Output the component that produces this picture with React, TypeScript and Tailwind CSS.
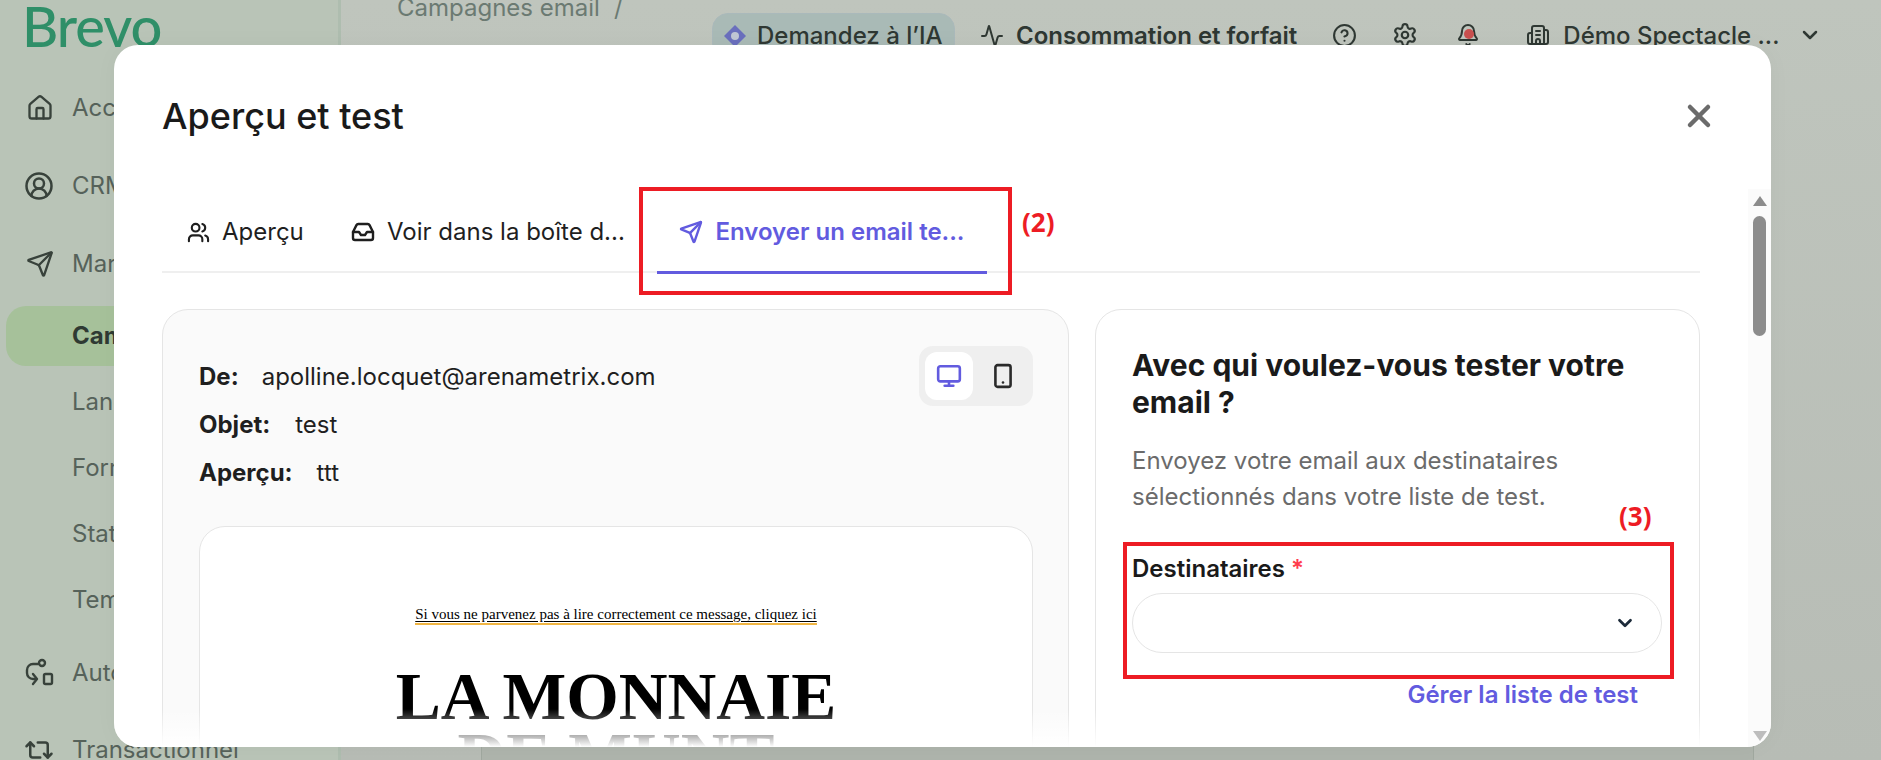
import { Activity, Bell, Building2, ChevronDown, CircleHelp, CircleUserRound, House, Inbox, Monitor, Repeat2, Send, Settings, Smartphone, Users, X } from "lucide-react";

const F = "font-['Inter','Liberation_Sans',sans-serif]";

function SubItem({ label, active }: { label: string; active?: boolean }) {
  return (
    <div className={`flex shrink-0 items-center rounded-[20px] pl-[66px] text-[24px] ${active ? "my-[3px] h-[60px] bg-[#a6c19a] font-bold text-[#2f3a33]" : "h-[66px] text-[#56625a]"}`}>
      {label}
    </div>
  );
}

function NavItem({ icon, label, height }: { icon: React.ReactNode; label: string; height: string }) {
  return (
    <div className={`flex shrink-0 items-center pl-[18px] text-[24px] text-[#56625a] ${height}`}>
      <span className="flex w-[48px] shrink-0 items-center">{icon}</span>
      <span className="whitespace-nowrap">{label}</span>
    </div>
  );
}

function Automation() {
  return (
    <svg width="30" height="30" viewBox="0 0 30 30" fill="none" stroke="#38423b" strokeWidth="2.4" strokeLinecap="round" strokeLinejoin="round">
      <circle cx="18" cy="5" r="3" />
      <path d="M14 6H9a6 6 0 0 0-6 6v3a6 6 0 0 0 6 6h3" />
      <path d="M9 16l4 5-4 5" />
      <rect x="20" y="16" width="8" height="10" rx="1.5" />
    </svg>
  );
}

function Tab({ icon, label, active, cls }: { icon: React.ReactNode; label: string; active?: boolean; cls: string }) {
  return (
    <div className={`flex h-[85px] items-center gap-[12px] border-b-[3px] pt-[4px] text-[24px] ${cls} ${active ? "border-[#625bdf] font-semibold text-[#625bdf]" : "border-transparent text-[#1f1f1f]"}`}>
      {icon}
      <span className="whitespace-nowrap">{label}</span>
    </div>
  );
}

export default function App() {
  return (
    <div className={`relative flex h-[760px] w-[1881px] overflow-hidden bg-gradient-to-b from-[#bfc5bd] to-[#b7bcb5] ${F}`}>
      <aside className="flex h-full w-[341px] shrink-0 flex-col border-r-[3px] border-[#aebdaf] bg-[#b9c4b7] pl-[6px] pr-[10px]">
        <div className="-mt-[9px] ml-[16px] h-[78px] shrink-0 text-[56px] font-medium leading-[70px] tracking-[-1px] font-['Lato',sans-serif] text-[#2f8f68]">Brevo</div>
        <NavItem height="h-[78px]" label="Accueil" icon={<House size={28} color="#38423b" className="ml-[2px]" />} />
        <NavItem height="h-[78px]" label="CRM" icon={<CircleUserRound size={30} color="#38423b" />} />
        <NavItem height="h-[78px]" label="Marketing" icon={<Send size={28} color="#38423b" className="ml-[2px]" />} />
        <SubItem label="Campagnes" active />
        <SubItem label="Landing pages" />
        <SubItem label="Formulaires" />
        <SubItem label="Statistiques" />
        <SubItem label="Templates" />
        <div className="h-[2px] shrink-0" />
        <NavItem height="h-[76px]" label="Automatisations" icon={<Automation />} />
        <NavItem height="h-[78px]" label="Transactionnel" icon={<Repeat2 size={30} color="#38423b" />} />
      </aside>

      <div className="flex min-w-0 flex-1 flex-col">
        <header className="relative h-[70px] shrink-0 text-[#2f3833]">
          <div className="flex h-[70px] items-start pl-[56px]">
            <div className="-mt-[6px] flex w-[315px] gap-[14px] whitespace-nowrap text-[24px] leading-[28px] text-[#6b7a72]"><span>Campagnes email</span><span>/</span></div>
            <div className="mt-[13px] flex h-[46px] w-[243px] items-center gap-[10px] rounded-[16px] border border-[#aab9bb] bg-[#a9bab6] pl-[10px] text-[24px] font-medium">
              <svg width="24" height="24" viewBox="0 0 24 24"><path d="M12 1l11 11-11 11L1 12z" fill="#6a6fbd" /><circle cx="12" cy="12" r="4" fill="#c0c6d4" /></svg>
              <span className="whitespace-nowrap">Demandez à l’IA</span>
            </div>
            <div className="ml-[25px] mt-[13px] flex h-[46px] items-center gap-[12px] whitespace-nowrap text-[24px] font-semibold"><Activity size={24} />Consommation et forfait</div>
            <CircleHelp size={25} className="ml-[35px] mt-[23px] shrink-0" />
            <Settings size={26} className="ml-[35px] mt-[22px] shrink-0" />
            <div className="relative ml-[38px] mt-[23px] h-[25px] w-[22px] shrink-0">
              <Bell size={24} />
              <span className="absolute left-[8px] top-[6px] h-[10px] w-[10px] rounded-full bg-[#c9504f]" />
            </div>
            <Building2 size={24} className="ml-[48px] mt-[23px] shrink-0" />
            <div className="ml-[13px] mt-[13px] flex h-[46px] items-center whitespace-nowrap text-[24px] font-medium">Démo Spectacle ...</div>
            <ChevronDown size={24} className="ml-[19px] mt-[23px] shrink-0" strokeWidth={2.5} />
          </div>
        </header>
        <div className="flex flex-1 pl-[140px]"><div className="flex-1 border-l border-[#a0a89f] bg-[#aeb4ac]" /><div className="w-[128px] border-l border-[#a0a89f]" /></div>
      </div>

      {/* Modal */}
      <div className="absolute left-[114px] top-[45px] flex h-[702px] w-[1657px] flex-col overflow-hidden rounded-[24px] bg-white shadow-[0_0_24px_rgba(0,0,0,0.03)]">
        <div className="flex h-[144px] shrink-0 items-start justify-between pl-[48px] pr-[54px] pt-[46px]">
          <h1 className="text-[36px] font-medium leading-[50px] text-[#1a1a1a]">Aperçu et test</h1>
          <X size={36} color="#6b6b6b" strokeWidth={3} className="mt-[7px]" />
        </div>
        <div className="flex min-h-0 flex-1">
          <div className="relative min-w-0 flex-1 pl-[48px] pr-[48px]">
            <div className="flex h-[84px] border-b-[2px] border-[#efefef]">
              <Tab cls="w-[170px] pl-[25px]" label="Aperçu" icon={<Users size={23} color="#1f1f1f" strokeWidth={2.2} />} />
              <Tab cls="w-[325px] pl-[19px]" label="Voir dans la boîte d..." icon={<Inbox size={24} color="#1f1f1f" strokeWidth={2.4} />} />
              <Tab active cls="w-[330px] justify-center" label="Envoyer un email te..." icon={<Send size={24} color="#625bdf" strokeWidth={2.4} />} />
            </div>
            <div className="mt-[36px] flex gap-[26px]">
              <section className="h-[500px] w-[907px] shrink-0 rounded-t-[26px] border border-[#e5e5e5] bg-[#fafafa] px-[36px] pt-[36px]">
                <div className="flex items-start justify-between">
                  <div className="flex flex-col gap-[20px] pt-[17px] text-[24px] leading-[28px] text-[#1f1f1f]">
                    <div className="flex gap-[23px]"><b className="font-bold">De:</b><span>apolline.locquet@arenametrix.com</span></div>
                    <div className="flex gap-[25px]"><b className="font-bold">Objet:</b><span>test</span></div>
                    <div className="flex gap-[24px]"><b className="font-bold">Aperçu:</b><span>ttt</span></div>
                  </div>
                  <div className="-mr-[1px] flex h-[60px] w-[114px] shrink-0 items-center gap-[6px] rounded-[14px] bg-[#efefef] p-[6px]">
                    <div className="flex h-[48px] w-[48px] items-center justify-center rounded-[12px] bg-white"><Monitor size={26} color="#625bdf" strokeWidth={2.4} /></div>
                    <div className="flex h-[48px] w-[48px] items-center justify-center"><Smartphone size={26} color="#2a2a2a" strokeWidth={2.4} /></div>
                  </div>
                </div>
                <div className="mt-[39px] h-[300px] w-[834px] rounded-t-[26px] border border-[#e5e5e5] bg-white pt-[77px] text-center font-['Liberation_Serif',serif] text-black">
                  <div className="text-[15px] leading-[20px]"><span className="border-b-2 border-[#f0b543] pb-[1px] underline underline-offset-[2px]">Si vous ne parvenez pas à lire correctement ce message, cliquez ici</span></div>
                  <div className="mt-[43px] text-[67.5px] font-bold leading-[60px]">LA MONNAIE</div>
                  <div className="text-[67.5px] font-bold leading-[60px]">DE MUNT</div>
                </div>
              </section>
              <section className="h-[500px] w-[605px] shrink-0 rounded-t-[26px] border border-[#e5e5e5] bg-white px-[36px] pt-[37px]">
                <h2 className="text-[30px] font-bold leading-[37px] text-[#1a1a1a]">Avec qui voulez-vous tester votre email ?</h2>
                <p className="mt-[22px] text-[24px] leading-[36px] text-[#6b6b6b]">Envoyez votre email aux destinataires sélectionnés dans votre liste de test.</p>
                <div className="mt-[40px] text-[24px] font-semibold leading-[28px] text-[#1a1a1a]">Destinataires <span className="text-[#ff3b4e]">*</span></div>
                <div className="mt-[10px] flex h-[60px] w-[530px] items-center justify-end rounded-[30px] border border-[#e5e5e5] pr-[25px]"><ChevronDown size={22} color="#1d2b3a" strokeWidth={3} /></div>
                <div className="mt-[28px] w-[506px] text-right text-[24px] font-semibold leading-[28px] text-[#625bdf]">Gérer la liste de test</div>
              </section>
            </div>
            <div className="absolute bottom-0 left-0 right-0 h-[38px] bg-gradient-to-t from-white to-transparent" />
            {/* Annotations */}
            <div className="absolute left-[525px] top-[-2px] h-[108px] w-[373px] border-[4px] border-[#ed1c24]" />
            <div className="absolute left-[908px] top-[15px] text-[26px] font-bold leading-[36px] text-[#ed1c24] font-['Open_Sans',sans-serif]">(2)</div>
            <div className="absolute left-[1009px] top-[353px] h-[137px] w-[551px] border-[4px] border-[#ed1c24]" />
            <div className="absolute left-[1505px] top-[309px] text-[26px] font-bold leading-[36px] text-[#ed1c24] font-['Open_Sans',sans-serif]">(3)</div>
          </div>
          <div className="flex w-[23px] shrink-0 flex-col items-center bg-[#fbfbfb] pt-[7px]">
            <div className="h-0 w-0 border-x-[7px] border-b-[10px] border-x-transparent border-b-[#8c8c8c]" />
            <div className="mt-[10px] h-[120px] w-[13px] rounded-[7px] bg-[#8c8c8c]" />
            <div className="mb-[6px] mt-auto h-0 w-0 border-x-[7px] border-t-[10px] border-x-transparent border-t-[#bdbdbd]" />
          </div>
        </div>
      </div>
    </div>
  );
}
